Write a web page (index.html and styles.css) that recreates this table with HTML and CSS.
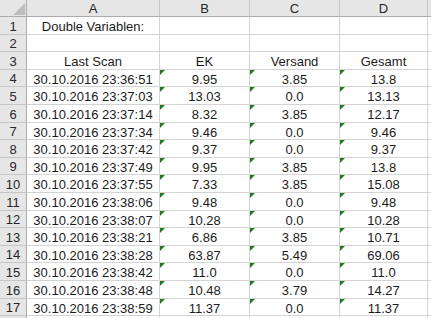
FILE: index.html
```html
<!DOCTYPE html>
<html>
<head>
<meta charset="utf-8">
<link rel="stylesheet" href="styles.css">
</head>
<body>
<div class="sheet">
  <div class="corner"></div><div class="ch">A</div><div class="ch">B</div><div class="ch">C</div><div class="ch">D</div><div class="ch ce"></div>

  <div class="rh">1</div><div class="c">Double Variablen:</div><div class="c"></div><div class="c"></div><div class="c"></div><div class="c ce"></div>
  <div class="rh">2</div><div class="c"></div><div class="c"></div><div class="c"></div><div class="c"></div><div class="c ce"></div>
  <div class="rh">3</div><div class="c">Last Scan</div><div class="c">EK</div><div class="c">Versand</div><div class="c">Gesamt</div><div class="c ce"></div>

  <div class="rh">4</div><div class="c">30.10.2016 23:36:51</div><div class="c t">9.95</div><div class="c t">3.85</div><div class="c t">13.8</div><div class="c ce"></div>
  <div class="rh">5</div><div class="c">30.10.2016 23:37:03</div><div class="c t">13.03</div><div class="c t">0.0</div><div class="c t">13.13</div><div class="c ce"></div>
  <div class="rh">6</div><div class="c">30.10.2016 23:37:14</div><div class="c t">8.32</div><div class="c t">3.85</div><div class="c t">12.17</div><div class="c ce"></div>
  <div class="rh">7</div><div class="c">30.10.2016 23:37:34</div><div class="c t">9.46</div><div class="c t">0.0</div><div class="c t">9.46</div><div class="c ce"></div>
  <div class="rh">8</div><div class="c">30.10.2016 23:37:42</div><div class="c t">9.37</div><div class="c t">0.0</div><div class="c t">9.37</div><div class="c ce"></div>
  <div class="rh">9</div><div class="c">30.10.2016 23:37:49</div><div class="c t">9.95</div><div class="c t">3.85</div><div class="c t">13.8</div><div class="c ce"></div>
  <div class="rh">10</div><div class="c">30.10.2016 23:37:55</div><div class="c t">7.33</div><div class="c t">3.85</div><div class="c t">15.08</div><div class="c ce"></div>
  <div class="rh">11</div><div class="c">30.10.2016 23:38:06</div><div class="c t">9.48</div><div class="c t">0.0</div><div class="c t">9.48</div><div class="c ce"></div>
  <div class="rh">12</div><div class="c">30.10.2016 23:38:07</div><div class="c t">10.28</div><div class="c t">0.0</div><div class="c t">10.28</div><div class="c ce"></div>
  <div class="rh">13</div><div class="c">30.10.2016 23:38:21</div><div class="c t">6.86</div><div class="c t">3.85</div><div class="c t">10.71</div><div class="c ce"></div>
  <div class="rh">14</div><div class="c">30.10.2016 23:38:28</div><div class="c t">63.87</div><div class="c t">5.49</div><div class="c t">69.06</div><div class="c ce"></div>
  <div class="rh">15</div><div class="c">30.10.2016 23:38:42</div><div class="c t">11.0</div><div class="c t">0.0</div><div class="c t">11.0</div><div class="c ce"></div>
  <div class="rh">16</div><div class="c">30.10.2016 23:38:48</div><div class="c t">10.48</div><div class="c t">3.79</div><div class="c t">14.27</div><div class="c ce"></div>
  <div class="rh">17</div><div class="c">30.10.2016 23:38:59</div><div class="c t">11.37</div><div class="c t">0.0</div><div class="c t">11.37</div><div class="c ce"></div>

  <div class="rh last"></div><div class="c last"></div><div class="c last"></div><div class="c last"></div><div class="c last"></div><div class="c ce last"></div>
</div>
</body>
</html>
```
FILE: styles.css
```css
html, body {
  margin: 0;
  padding: 0;
  background: #ffffff;
  overflow: hidden;
}
.sheet {
  display: grid;
  grid-template-columns: 27px 133px 90px 90px 88px 3px;
  grid-template-rows: 17px 18px 17px 18px 17px 18px 18px 17px 18px 17px 18px 18px 17px 18px 17px 18px 18px 17px 2px;
  font-family: "Liberation Sans", Arial, sans-serif;
  font-size: 13px;
  color: #1b1b1b;
  width: 431px;
}
.sheet > div {
  box-sizing: border-box;
  display: flex;
  align-items: center;
  justify-content: center;
  white-space: nowrap;
  overflow: visible;
  position: relative;
  line-height: 1;
}
.corner {
  background: #e6e6e6;
  border-right: 1px solid #ababab;
  border-bottom: 1px solid #ababab;
}
.corner::after {
  content: "";
  position: absolute;
  right: 1px;
  bottom: 1px;
  width: 12px;
  height: 12px;
  background: #bdbdbd;
  clip-path: polygon(100% 0, 100% 100%, 0 100%);
}
.ch {
  background: #e6e6e6;
  border-right: 1px solid #c6c6c6;
  border-bottom: 1px solid #ababab;
  color: #262626;
  padding-top: 1px;
}
.rh {
  background: #e6e6e6;
  border-right: 1px solid #ababab;
  border-bottom: 1px solid #c6c6c6;
  color: #262626;
  padding-top: 1px;
}
.c {
  border-right: 1px solid #d4d4d4;
  border-bottom: 1px solid #d4d4d4;
  padding-top: 2px;
}
.sheet > .last {
  border-bottom: none;
}
.t::before {
  content: "";
  position: absolute;
  left: 0;
  top: 0;
  width: 5px;
  height: 5px;
  background: #1e7b1e;
  clip-path: polygon(0 0, 100% 0, 0 100%);
}
.ce {
  border-right: none;
}
.ch.ce {
  border-right: none;
}
```
